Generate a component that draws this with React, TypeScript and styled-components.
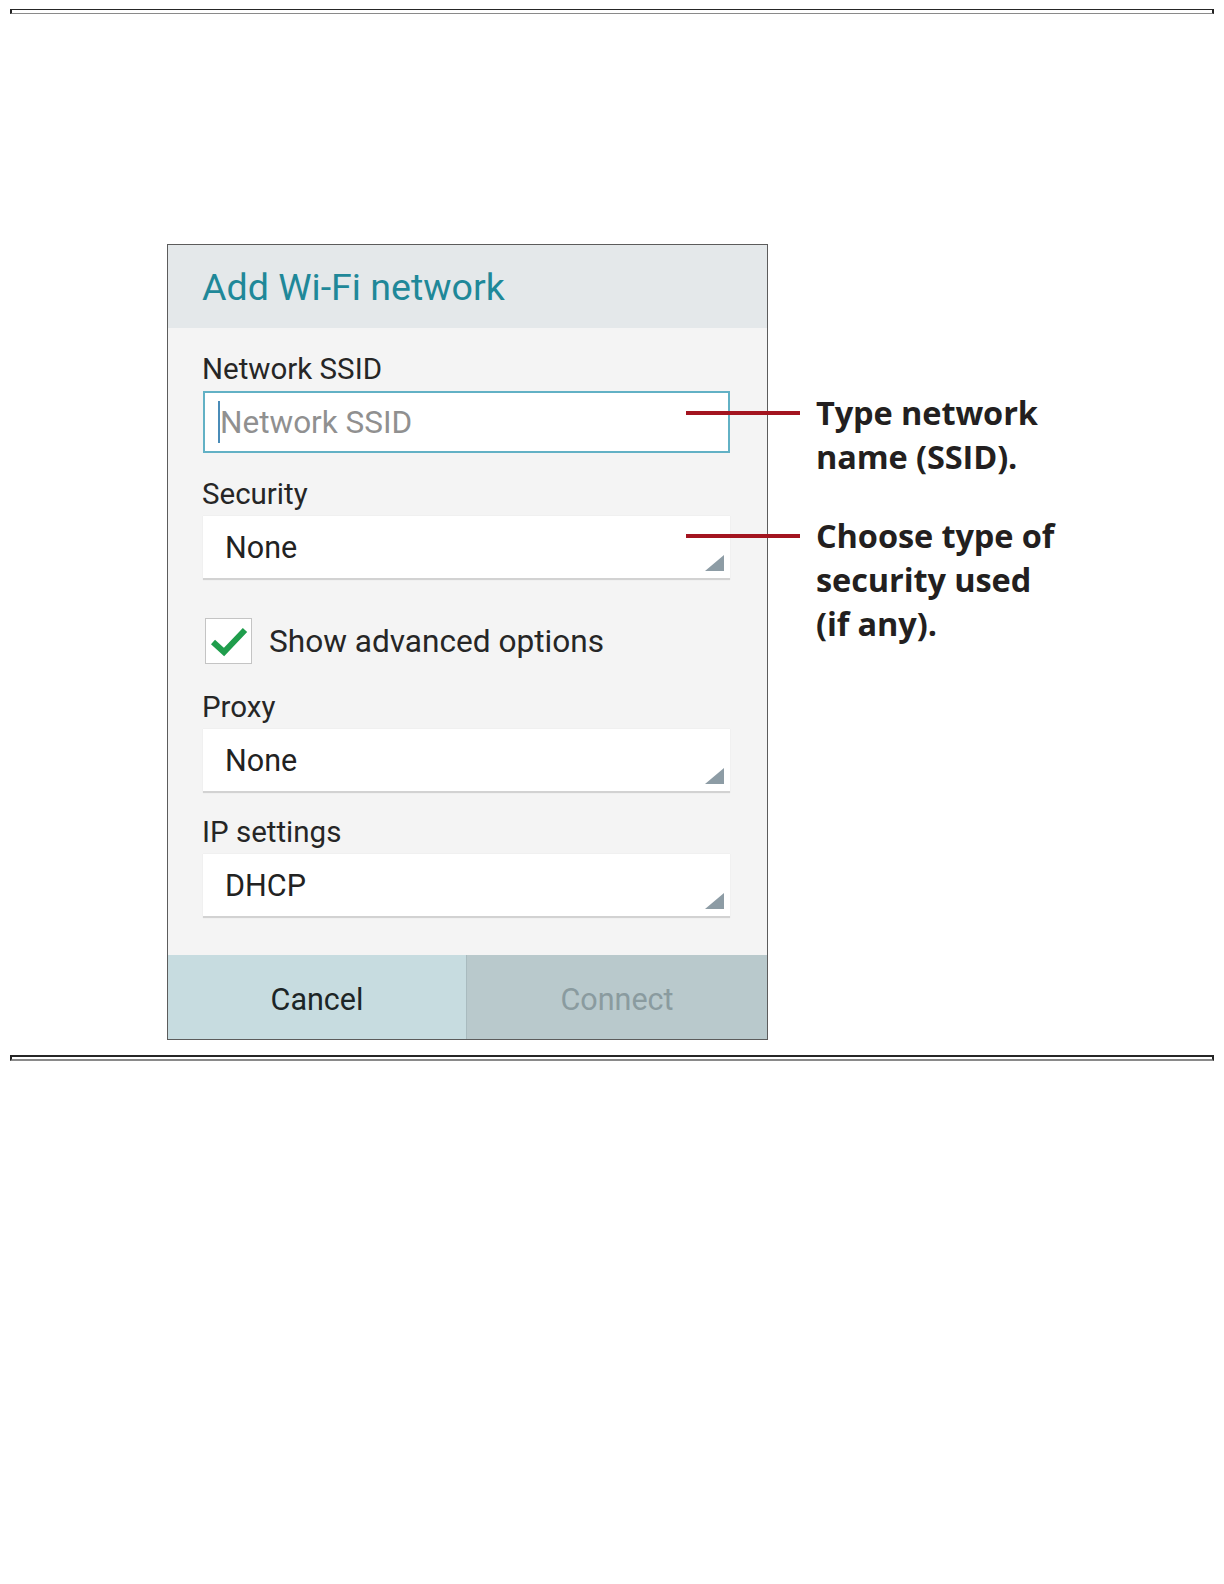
import styled, { createGlobalStyle } from "styled-components"

const GlobalStyle = createGlobalStyle`
    html, body {
        margin: 0;
        padding: 0;
        background: #fff;
    }
    body {
        width: 1224px;
        min-height: 1584px;
        font-family: Roboto, "Liberation Sans", sans-serif;
    }
`

const Page = styled.div`
    width: 1224px;
    min-height: 1584px;
    padding-top: 9px;
    box-sizing: border-box;
`

const Rule = styled.div<{ $heavy?: boolean }>`
    margin: 0 10px;
    height: ${p => p.$heavy ? 2 : 3}px;
    border-top: ${p => p.$heavy ? 2 : 1}px solid #262626;
    border-bottom: ${p => p.$heavy ? 2 : 1}px solid #8a8a8a;
    border-left: 2px solid #222;
    border-right: 2px solid #222;
`

const Figure = styled.div`
    display: flex;
    align-items: flex-start;
    padding-left: 167px;
    margin: 230px 0 15px;
`

const Dialog = styled.div`
    width: 599px;
    border: 1px solid #5c5c5c;
    background: #f4f4f4;
    display: flex;
    flex-direction: column;
`

const Header = styled.div`
    height: 83px;
    background: #e4e8ea;
    display: flex;
    align-items: center;
    padding: 0 0 0 34px;
    box-sizing: border-box;
`

const Title = styled.h1`
    margin: 0;
    font-size: 37.6px;
    font-weight: 400;
    color: #1f8899;
`

const Body = styled.div`
    padding: 23px 37px 37px 35px;
    display: flex;
    flex-direction: column;
`

const Group = styled.div<{ $top?: number }>`
    margin-top: ${p => p.$top ?? 23}px;
    display: flex;
    flex-direction: column;
    &:first-child {
        margin-top: 0;
    }
`

const Label = styled.div`
    font-size: 29.5px;
    line-height: 36px;
    color: #262626;
    margin: 0 0 4px -1px;
`

const InputBox = styled.div`
    height: 62px;
    box-sizing: border-box;
    border: 2px solid #62b1c5;
    background: #fff;
    display: flex;
    align-items: center;
    padding-left: 13px;
`

const Caret = styled.span`
    width: 2px;
    height: 42px;
    background: #4a8cb8;
`

const Placeholder = styled.span`
    font-size: 31.5px;
    color: #909090;
`

const Select = styled.div`
    height: 64px;
    box-sizing: border-box;
    background: #fff;
    border-bottom: 2px solid #d2d2d2;
    box-shadow: 0 0 1px rgb(0 0 0 / 10%);
    display: flex;
    align-items: center;
    padding-left: 22px;
`

const SelectValue = styled.span`
    flex: 1;
    font-size: 30.5px;
    color: #222;
`

const Arrow = styled.svg`
    align-self: flex-end;
    margin: 0 6px 7px 0;
`

const CheckRow = styled.div`
    margin-top: 38px;
    display: flex;
    align-items: center;
    gap: 17px;
`

const CheckBox = styled.div`
    width: 47px;
    height: 46px;
    margin-left: 2px;
    box-sizing: border-box;
    border: 1.5px solid #c4c4c4;
    background: #fff;
    display: flex;
    align-items: center;
    justify-content: center;
`

const CheckText = styled.span`
    font-size: 31.6px;
    color: #262626;
`

const Buttons = styled.div`
    display: grid;
    grid-template-columns: 298px 1fr;
    height: 84px;
`

const Button = styled.div<{ $disabled?: boolean }>`
    display: flex;
    align-items: center;
    justify-content: center;
    font-size: 30.5px;
    padding-top: 4px;
    background: ${p => p.$disabled ? "#b9c9cc" : "#c7dce0"};
    color: ${p => p.$disabled ? "#8a9b9f" : "#1c2526"};
    border-left: ${p => p.$disabled ? "1px solid #a9bbbf" : "none"};
`

const Callouts = styled.div`
    position: relative;
    z-index: 1;
    margin: 147px 0 0 -82px;
    display: flex;
    flex-direction: column;
    gap: 35px;
`

const Callout = styled.div`
    display: flex;
    align-items: flex-start;
    gap: 16px;
`

const Leader = styled.span`
    width: 114px;
    height: 4px;
    margin-top: 20px;
    background: #a3141f;
    flex-shrink: 0;
`

const CalloutText = styled.p`
    margin: 0;
    font-family: "Open Sans", "Noto Sans", sans-serif;
    font-weight: 700;
    font-size: 32.5px;
    line-height: 44px;
    color: #231f20;
    letter-spacing: -0.1px;
`

const Triangle = () => (
    <Arrow width="19" height="16" viewBox="0 0 19 16">
        <polygon points="19,0 19,16 0,16" fill="#8d9ca5" />
    </Arrow>
)

const Dropdown = ({ value }: { value: string }) => (
    <Select>
        <SelectValue>{value}</SelectValue>
        <Triangle />
    </Select>
)

const App = () => {
    return (
        <Page>
            <GlobalStyle />
            <Rule />
            <Figure>
                <Dialog>
                    <Header>
                        <Title>Add Wi-Fi network</Title>
                    </Header>
                    <Body>
                        <Group>
                            <Label>Network SSID</Label>
                            <InputBox>
                                <Caret />
                                <Placeholder>Network SSID</Placeholder>
                            </InputBox>
                        </Group>
                        <Group>
                            <Label>Security</Label>
                            <Dropdown value="None" />
                        </Group>
                        <CheckRow>
                            <CheckBox>
                                <svg width="40" height="32" viewBox="0 0 40 32">
                                    <polyline points="4,17 15,27 36,5" fill="none" stroke="#1f9d4c" strokeWidth="6" strokeLinejoin="miter" />
                                </svg>
                            </CheckBox>
                            <CheckText>Show advanced options</CheckText>
                        </CheckRow>
                        <Group $top={25}>
                            <Label>Proxy</Label>
                            <Dropdown value="None" />
                        </Group>
                        <Group $top={21}>
                            <Label>IP settings</Label>
                            <Dropdown value="DHCP" />
                        </Group>
                    </Body>
                    <Buttons>
                        <Button>Cancel</Button>
                        <Button $disabled>Connect</Button>
                    </Buttons>
                </Dialog>
                <Callouts>
                    <Callout>
                        <Leader />
                        <CalloutText>Type network<br />name (SSID).</CalloutText>
                    </Callout>
                    <Callout>
                        <Leader />
                        <CalloutText>Choose type of<br />security used<br />(if any).</CalloutText>
                    </Callout>
                </Callouts>
            </Figure>
            <Rule $heavy />
        </Page>
    )
}

export default App
